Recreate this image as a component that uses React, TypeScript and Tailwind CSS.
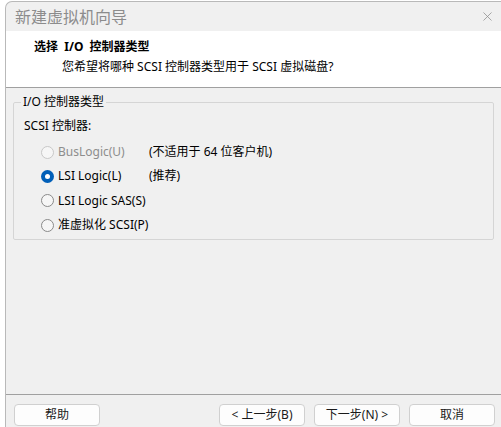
import { X } from "lucide-react";

const font = { fontFamily: '"Noto Sans", "Noto Sans CJK SC", sans-serif' };

const Radio = ({ checked, disabled }: { checked?: boolean; disabled?: boolean }) =>
  checked ? (
    <span className="flex h-[13px] w-[13px] items-center justify-center rounded-full bg-[#005fb8]">
      <span className="h-[5px] w-[5px] rounded-full bg-white" />
    </span>
  ) : (
    <span
      className={
        "h-[13px] w-[13px] rounded-full border bg-[#f6f6f6] " +
        (disabled ? "border-[#c8c8c8]" : "border-[#8a8a8a]")
      }
    />
  );

const options = [
  { label: "BusLogic(U)", note: "(不适用于 64 位客户机)", disabled: true },
  { label: "LSI Logic(L)", note: "(推荐)", checked: true },
  { label: "LSI Logic SAS(S)" },
  { label: "准虚拟化 SCSI(P)" },
];

const WizardButton = ({ children }: { children: React.ReactNode }) => (
  <button className="flex h-[22px] w-[86px] items-center justify-center rounded-[4px] border border-[#d0d0d0] bg-[#fdfdfd] text-[12px] text-[#1a1a1a]">
    {children}
  </button>
);

export default function App() {
  return (
    <div className="h-[427px] w-[501px] overflow-hidden bg-white pt-[1px] pl-[5px]" style={font}>
      <div className="flex h-[426px] flex-col rounded-tl-[7px] border-l border-t border-[#b9b9b9] bg-[#f0f0f0]">
        {/* title bar */}
        <div className="flex h-[29px] items-center justify-between pl-[9px] pr-[6px]">
          <span className="text-[16px] text-[#8c8c8c]">新建虚拟机向导</span>
          <X className="h-[15px] w-[15px] text-[#8c8c8c]" strokeWidth={1.2} />
        </div>

        {/* header */}
        <div className="h-[57px] border-b border-[#a0a0a0] bg-white pl-[28px] pt-[7px]">
          <div className="text-[12px] font-bold leading-[17px] text-black">选择&nbsp; I/O&nbsp; 控制器类型</div>
          <div className="pl-[28px] pt-[2px] text-[12px] leading-[19px] text-black">
            您希望将哪种 SCSI 控制器类型用于 SCSI 虚拟磁盘?
          </div>
        </div>

        {/* body */}
        <div className="flex-1 px-[7px] pt-[7px]">
          <fieldset className="h-[145px] rounded-[2px] border border-[#d5d5d5] pl-[10px] pt-[9px]">
            <legend className="ml-[-3px] px-[2px] text-[12px] leading-[14px] text-black">I/O 控制器类型</legend>
            <div className="text-[12px] leading-[16px] text-black">SCSI 控制器:</div>
            <div className="mt-[6px] flex flex-col pl-[17px]">
              {options.map((o) => (
                <div key={o.label} className="flex h-[24.3px] items-center text-[12px]">
                  <Radio checked={o.checked} disabled={o.disabled} />
                  <span className={"ml-[4px] w-[91px] " + (o.disabled ? "text-[#8d8d8d]" : "text-black")}>
                    {o.label}
                  </span>
                  {o.note && <span className="text-black">{o.note}</span>}
                </div>
              ))}
            </div>
          </fieldset>
        </div>

        {/* footer */}
        <div className="flex h-[33px] items-start border-t border-[#a0a0a0] pt-[9px] pl-[8px] pr-[6px]">
          <WizardButton>帮助</WizardButton>
          <div className="ml-auto flex gap-[9px]">
            <WizardButton>&lt; 上一步(B)</WizardButton>
            <WizardButton>下一步(N) &gt;</WizardButton>
            <WizardButton>取消</WizardButton>
          </div>
        </div>
      </div>
    </div>
  );
}
